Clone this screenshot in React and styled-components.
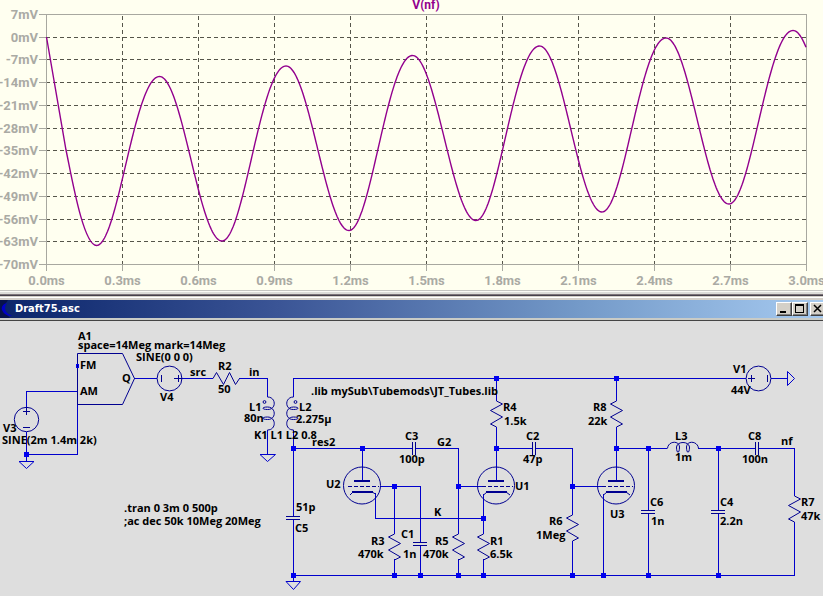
import React from "react";
import styled, { createGlobalStyle } from "styled-components";

const GlobalStyle = createGlobalStyle`
  body { margin: 0; background: #dedede; }
`;

const Workspace = styled.main`
  display: flex;
  flex-direction: column;
  min-height: 100vh;
  overflow-x: hidden;
`;

const PlotPanel = styled.section`
  background: #fffff0;
`;

const SchematicPanel = styled.section`
  background: #dedede;
`;

const Drawing = styled.svg`
  display: block;
  width: 100%;
  height: auto;
`;

const WindowFrame = styled.div`
  height: 10px;
  background: linear-gradient(
    #c6c6c2 0 1px, #fafaf4 1px 2px, #dcdcd8 2px 4px, #7c7478 4px 5px,
    #45404a 5px 6px, #d4d0c8 6px 7px, #ffffff 7px 8px, #d4d0c8 8px 10px
  );
`;

const TitleBar = styled.header`
  display: flex;
  align-items: center;
  height: 18px;
  border-bottom: 2px solid #c9cbc6;
  box-shadow: 0 1px #454545;
  margin-bottom: 1px;
  background: linear-gradient(90deg, #0a246a, #3b5596 34%, #7399c8 70%, #a6caf0);
  overflow: hidden;
`;

const DocIcon = styled.svg`
  width: 12px;
  height: 18px;
  margin-right: 3px;
`;

const Title = styled.h1`
  flex: 1;
  margin: 0;
  color: #fff;
  font: bold 11px/18px "DejaVu Sans Condensed", "DejaVu Sans", sans-serif;
`;

const Controls = styled.div`
  display: flex;
  margin-right: -3px;
`;

const ControlButton = styled.button`
  display: flex;
  width: 16px;
  height: 14px;
  padding: 0;
  margin-left: ${(p) => (p.$apart ? "2px" : "0")};
  border: 1px solid;
  border-color: #fff #404040 #404040 #fff;
  box-shadow: inset -1px -1px #808080;
  background: #d4d0c8;
`;

const AxisLabel = styled.text`
  font: bold 13px Roboto, sans-serif;
  fill: #aaaaa4;
  text-anchor: ${(p) => p.$anchor};
`;

const TraceLabel = styled.text`
  font: bold 12px Roboto, sans-serif;
  fill: #92008e;
  text-anchor: middle;
`;

const Label = styled.text`
  font: bold 11px "Open Sans", sans-serif;
  fill: #000;
`;

const Axis = styled.path`
  fill: none;
  stroke: #a8a8a0;
  shape-rendering: crispEdges;
`;

const Grid = styled.path`
  fill: none;
  stroke: #55554a;
  stroke-dasharray: 4 3;
  shape-rendering: crispEdges;
`;

const Trace = styled.path`
  fill: none;
  stroke: #92008e;
  stroke-width: 1.4;
`;

const Wire = styled.path`
  fill: none;
  stroke: #0000cc;
  shape-rendering: crispEdges;
`;

const Part = styled.g`
  fill: none;
  stroke: #000090;
`;

const Node = styled.rect`
  fill: #0000ee;
  shape-rendering: crispEdges;
`;

/* ---------- waveform ---------- */

const volts = [7, 0, -7, -14, -21, -28, -35, -42, -49, -56, -63, -70];
const yOf = (v) => Math.round(14 + ((7 - v) * 250) / 77) + 0.5;
const times = Array.from({ length: 11 }, (_, i) => i);
const xOf = (i) => 46.5 + 76 * i;

const extremes = [
  [96.5, 245.5], [159.5, 76.5], [222, 241], [286, 66], [349, 230.5], [412.5, 55.5],
  [476, 220.5], [539.5, 46], [602, 212], [666, 38], [729, 204], [793, 30.5], [856, 196],
];

function tracePath() {
  let d = "M46.5 37 L66 150 C71 173 83 245.5 96.5 245.5";
  for (let i = 0; i < extremes.length - 1; i++) {
    const [x0, y0] = extremes[i];
    const [x1, y1] = extremes[i + 1];
    const rising = y1 < y0;
    for (let x = x0 + 1; x <= x1 && x <= 806.5; x += 1) {
      const a = (Math.PI * (x - x0)) / (x1 - x0);
      const lift = rising ? 6 * Math.sin(a) ** 2 : 0;
      const y = (y0 + y1) / 2 + ((y0 - y1) / 2) * Math.cos(a) - lift;
      d += ` L${x.toFixed(1)} ${y.toFixed(1)}`;
    }
  }
  return d;
}

function Plot() {
  return (
    <Drawing viewBox="0 0 823 290" role="img" aria-label="V(nf) waveform">
      <Grid d={volts.slice(1, -1).map((v) => `M46 ${yOf(v)}H806`).join("")} />
      <Grid d={times.slice(1, -1).map((i) => `M${xOf(i)} 16V264`).join("")} />
      <Axis d="M46.5 14.5H806.5V264.5H46.5Z" />
      <Axis d={volts.map((v) => `M39 ${yOf(v)}H46`).join("")} />
      <Axis d={times.map((i) => `M${xOf(i)} 264V271`).join("")} />
      <Trace d={tracePath()} />
      {volts.map((v) => (
        <AxisLabel key={v} $anchor="end" x="38" y={yOf(v) + 4.5}>{v}mV</AxisLabel>
      ))}
      {times.map((i) => (
        <AxisLabel key={i} $anchor="middle" x={xOf(i)} y="285">{(i * 0.3).toFixed(1)}ms</AxisLabel>
      ))}
      <TraceLabel x="426" y="9">V(nf)</TraceLabel>
    </Drawing>
  );
}

/* ---------- schematic ---------- */

const wires = [
  "M77 391.5H26.5V407", "M26.5 432V461", "M26 454.5H77.5V404",
  "M134 378.5H157", "M182 378.5H213", "M239 378.5H267.5V397", "M267.5 430V454",
  "M293.5 397V378.5H746", "M771 378.5H787",
  "M293.5 430V516", "M293.5 520V581",
  "M293 448.5H412", "M416 448.5H458.5V534", "M362.5 448V481",
  "M380 486.5H420.5V542", "M394.5 486V534", "M394.5 559V575", "M420.5 546V575",
  "M375.5 493V518.5H483", "M458.5 559V575", "M458 486.5H482",
  "M483.5 494V534", "M483.5 559V575",
  "M496.5 378V401", "M496.5 427V481", "M496 448.5H532", "M536 448.5H572.5V515",
  "M572.5 541V575", "M572 486.5H602", "M603.5 494V575",
  "M616.5 378V401", "M616.5 427V481", "M616 448.5H667", "M698 448.5H755",
  "M758 448.5H794.5V496", "M648.5 448V511", "M648.5 514V575",
  "M718.5 448V511", "M718.5 514V575", "M293 575.5H794.5V522",
];

const nodes = [
  [26, 454], [293, 448], [362, 448], [496, 378], [616, 378], [496, 448], [616, 448],
  [648, 448], [718, 448], [394, 486], [458, 486], [572, 486], [483, 518],
  [293, 575], [394, 575], [420, 575], [458, 575], [483, 575], [572, 575],
  [603, 575], [648, 575], [718, 575],
];

const resistors = [
  [394.5, 534, -1], [458.5, 534, -1], [483.5, 534, -1], [496.5, 401, 1],
  [616.5, 401, -1], [572.5, 515, -1], [794.5, 496, 1],
];

const labels = [
  [78, 340, "A1"], [78, 349, "space=14Meg mark=14Meg"], [136, 361, "SINE(0 0 0)"],
  [190, 376, "src"], [80, 369, "FM"], [80, 395, "AM"], [122, 382, "Q"],
  [160, 401, "V4"], [3, 432, "V3"], [2, 444, "SINE(2m 1.4m 2k)"],
  [218, 370, "R2"], [218, 393, "50"], [249, 376, "in"],
  [249, 411, "L1"], [244, 422, "80n"], [299, 411, "L2"], [296, 423, "2.275µ"],
  [254, 439, "K1 L1 L2 0.8"], [312, 446, "res2"],
  [311, 395, ".lib mySub\\Tubemods\\JT_Tubes.lib"],
  [437, 446, "G2"], [405, 440, "C3"], [399, 463, "100p"], [326, 488, "U2"],
  [296, 511, "51p"], [295, 532, "C5"], [434, 516, "K"],
  [371, 545, "R3"], [358, 558, "470k"], [401, 538, "C1"], [403, 558, "1n"],
  [435, 545, "R5"], [423, 558, "470k"], [490, 545, "R1"], [490, 558, "6.5k"],
  [515, 490, "U1"], [549, 525, "R6"], [536, 539, "1Meg"], [610, 518, "U3"],
  [503, 411, "R4"], [504, 425, "1.5k"], [526, 440, "C2"], [523, 463, "47p"],
  [733, 373, "V1"], [731, 394, "44V"], [593, 411, "R8"], [588, 425, "22k"],
  [675, 440, "L3"], [675, 461, "1m"], [748, 440, "C8"], [742, 463, "100n"],
  [781, 445, "nf"], [650, 506, "C6"], [651, 525, "1n"], [720, 506, "C4"],
  [720, 525, "2.2n"], [801, 506, "R7"], [801, 520, "47k"],
  [124, 512, ".tran 0 3m 0 500p"], [124, 525, ";ac dec 50k 10Meg 20Meg"],
];

function Resistor({ x, y, side }) {
  const s = side * 6;
  return (
    <path d={`M${x} ${y}L${x + s} ${y + 3}L${x - s} ${y + 9.5}L${x + s} ${y + 16}L${x - s} ${y + 23}L${x} ${y + 26}`} />
  );
}

function Coil({ x, side }) {
  const s = side;
  return (
    <>
      <path
        d={`M${x} 397C${x + 9 * s} 397 ${x + 9 * s} 410 ${x} 409.5C${x - 6 * s} 409.5 ${x - 6 * s} 407 ${x} 407C${x + 9 * s} 407 ${x + 9 * s} 420 ${x} 419.5C${x - 6 * s} 419.5 ${x - 6 * s} 417 ${x} 417C${x + 9 * s} 417 ${x + 9 * s} 430 ${x} 430`}
      />
      <circle cx={x - 3 * s + (s > 0 ? 0 : -1)} cy="402" r="1.4" />
    </>
  );
}

function Triode({ x, side }) {
  return (
    <g>
      <circle cx={x} cy="485.5" r="18.5" />
      <path shapeRendering="crispEdges" strokeWidth="2" d={`M${x - 8} 481H${x + 8}M${x - 10} 492H${x + 11}`} />
      <path shapeRendering="crispEdges" strokeDasharray="4 2" d={`M${x - 14} 486.5H${x + 17}`} />
      <path
        d={
          side < 0
            ? `M${x - 9} 492L${x - 12.5} 495M${x + 10} 492L${x + 14} 495`
            : `M${x + 10} 492L${x + 13.5} 494M${x - 9} 492L${x - 12} 495`
        }
      />
    </g>
  );
}

function Schematic() {
  return (
    <Drawing viewBox="0 321 823 275" role="img" aria-label="Circuit schematic">
      <Wire d={wires.join("")} />
      <Part>
        <path d="M77.5 404.5V353.5H122.5L134.5 378.5L122.5 404.5Z" />
        <circle cx="26.5" cy="419.5" r="12.2" />
        <circle cx="169.5" cy="378.5" r="12.4" />
        <circle cx="758.5" cy="378.5" r="12.4" />
        <path
          shapeRendering="crispEdges"
          d="M23 411.5H30M26.5 407V415M23 427.5H30M161.5 375V382M174 378.5H182M178.5 375V382M748 378.5H755M751.5 375V382M767.5 375V382"
        />
        <path d="M213 378.5L216.5 372.5L223.5 384.5L229.5 372.5L235.5 384.5L239.5 378.5" />
        {resistors.map(([x, y, side]) => (
          <Resistor key={x} x={x} y={y} side={side} />
        ))}
        <Coil x={267.5} side={1} />
        <Coil x={293.5} side={-1} />
        <path d="M667.5 448.5C668 441 679 440 679.5 447C679.5 454 676.5 454 676.5 447C677 441 689 441 689.5 447C689.5 454 686.5 454 686.5 447C687 440 698 441 698.5 448.5" />
        <path
          shapeRendering="crispEdges"
          d="M412.5 442V455M415.5 442V455M532.5 442V455M535.5 442V455M755.5 442V455M758.5 442V455M286 516.5H300M286 519.5H300M413 542.5H427M413 545.5H427M641 510.5H655M641 513.5H655M711 510.5H725M711 513.5H725"
        />
        <Triode x={362} side={1} />
        <Triode x={496} side={-1} />
        <Triode x={616} side={-1} />
      </Part>
      <Part>
        <path
          stroke="#0000cc"
          d="M19 461.5H34L26.5 468.5ZM260 454.5H275.5L267.5 461.5ZM286 581.5H300.5L293.5 589.5ZM787.5 371.5V385.5L794.5 378.5Z"
        />
        <rect x="76.5" y="364.5" width="2" height="3" stroke="#0000ee" />
      </Part>
      {nodes.map(([x, y]) => (
        <Node key={`${x}-${y}`} x={x - 2} y={y - 2} width="5" height="5" />
      ))}
      {labels.map(([x, y, text]) => (
        <Label key={`${x}-${y}`} x={x} y={y}>{text}</Label>
      ))}
    </Drawing>
  );
}

function Control({ name, apart, children }) {
  return (
    <ControlButton type="button" aria-label={name} $apart={apart}>
      <svg width="14" height="12" viewBox="0 0 14 12" fill="none" stroke="#000" shapeRendering="crispEdges">
        {children}
      </svg>
    </ControlButton>
  );
}

export default function App() {
  return (
    <>
      <GlobalStyle />
      <Workspace>
        <PlotPanel>
          <Plot />
        </PlotPanel>
        <WindowFrame />
        <TitleBar>
          <DocIcon viewBox="0 0 12 18" aria-hidden="true">
            <path d="M0 0H8L2 9L10 18H0Z" fill="#06124a" />
            <path d="M7 3C3 4 1 7 2 10C4 14 7 16 12 16C8 14 5 12 5 8C5 6 6 4 7 3Z" fill="#0000c8" />
          </DocIcon>
          <Title>Draft75.asc</Title>
          <Controls>
            <Control name="Minimize"><path d="M3 9H9" strokeWidth="2" /></Control>
            <Control name="Maximize"><path d="M2.5 1V9.5H10.5V1" /><path d="M2 2H11" strokeWidth="2" /></Control>
            <Control name="Close" apart>
              <path d="M3 2L10 9M10 2L3 9" strokeWidth="1.5" shapeRendering="auto" />
            </Control>
          </Controls>
        </TitleBar>
        <SchematicPanel>
          <Schematic />
        </SchematicPanel>
      </Workspace>
    </>
  );
}
